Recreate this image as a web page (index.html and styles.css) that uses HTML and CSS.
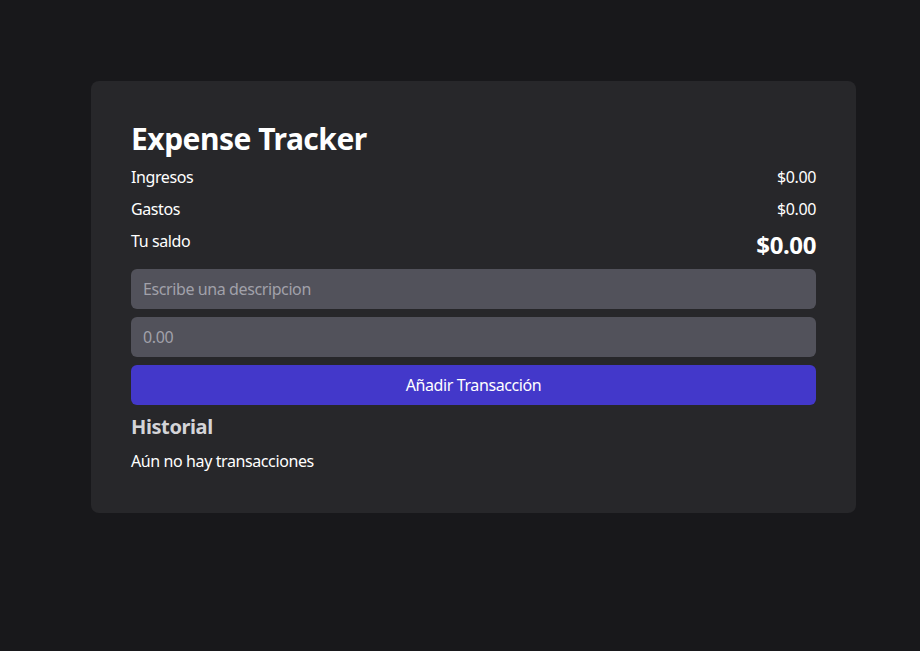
FILE: index.html
```html
<!DOCTYPE html>
<html lang="es">
<head>
<meta charset="utf-8">
<title>Expense Tracker</title>
<link rel="stylesheet" href="styles.css">
</head>
<body>
<main class="card">
  <h1 class="title">Expense Tracker</h1>
  <div class="row"><span>Ingresos</span><span>$0.00</span></div>
  <div class="row"><span>Gastos</span><span>$0.00</span></div>
  <div class="row"><span>Tu saldo</span><span class="balance">$0.00</span></div>
  <input class="field" type="text" placeholder="Escribe una descripcion">
  <input class="field" type="text" placeholder="0.00">
  <button class="btn" type="button">Añadir Transacción</button>
  <h2 class="subtitle">Historial</h2>
  <p class="empty">Aún no hay transacciones</p>
</main>
</body>
</html>
```
FILE: styles.css
```css
* { box-sizing: border-box; }
html, body { margin: 0; padding: 0; }
body {
  background: #18181b;
  color: #ffffff;
  font-family: "Noto Sans", "Open Sans", sans-serif;
  font-size: 16px;
  line-height: 24px;
  letter-spacing: -0.4px;
  min-height: 651px;
  padding: 81px 0 0 91px;
}
.card {
  width: 765px;
  background: #27272a;
  border-radius: 8px;
  padding: 40px;
  display: flex;
  flex-direction: column;
  gap: 8px;
}
.title {
  margin: 0;
  font-size: 30px;
  line-height: 36px;
  font-weight: 700;
  letter-spacing: -0.5px;
}
.row {
  display: flex;
  justify-content: space-between;
  align-items: flex-start;
}
.balance {
  font-size: 24px;
  line-height: 32px;
  font-weight: 700;
}
.field {
  height: 40px;
  border: none;
  border-radius: 6px;
  background: #52525b;
  color: #fff;
  font: inherit;
  letter-spacing: inherit;
  padding: 0 12px;
  outline: none;
}
.field::placeholder { color: #a1a1aa; }
.btn {
  height: 40px;
  border: none;
  border-radius: 6px;
  background: #4338ca;
  color: #fff;
  font: inherit;
  letter-spacing: inherit;
}
.subtitle {
  margin: 0;
  font-size: 20px;
  line-height: 28px;
  font-weight: 700;
  color: #d4d4d8;
}
.empty { margin: 0; }
```
